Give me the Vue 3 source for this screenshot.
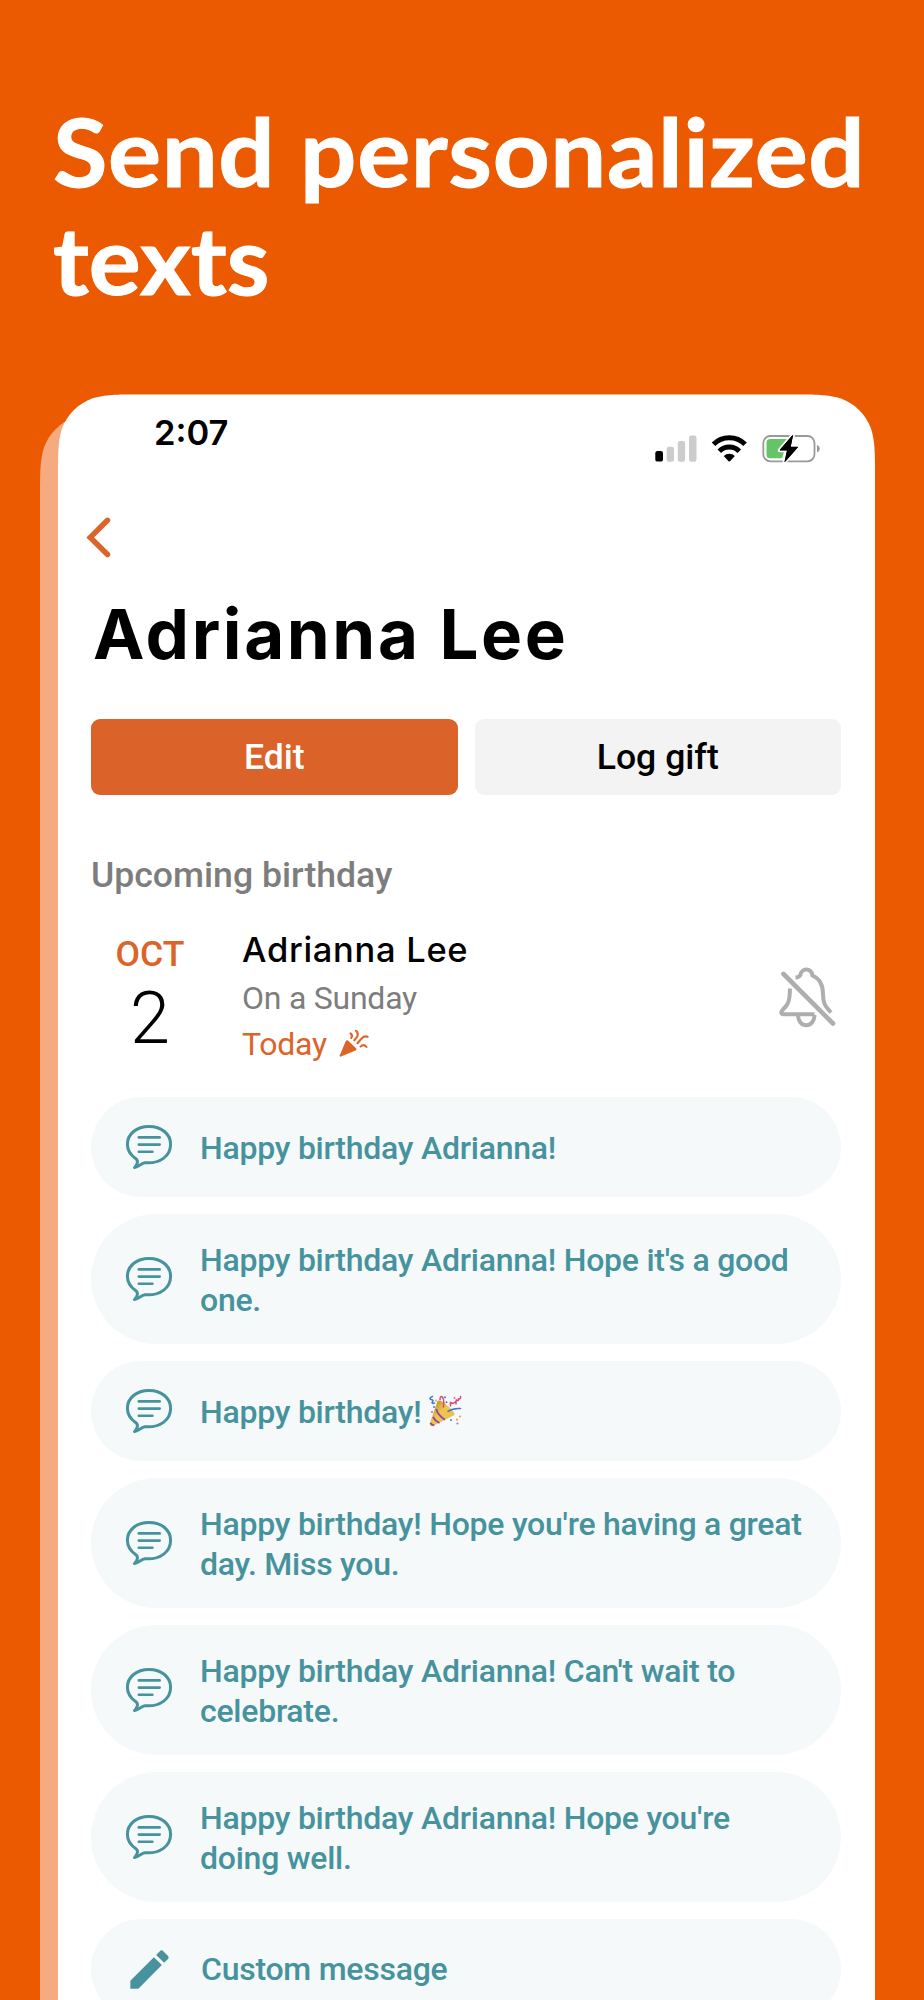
<script setup>
const messages = [
  { text: 'Happy birthday Adrianna!' },
  { text: "Happy birthday Adrianna! Hope it's a good one.", tall: true },
  { text: 'Happy birthday!', party: true },
  { text: "Happy birthday! Hope you're having a great day. Miss you.", tall: true },
  { text: "Happy birthday Adrianna! Can't wait to celebrate.", tall: true },
  { text: "Happy birthday Adrianna! Hope you're doing well.", tall: true },
]
</script>

<template>
  <div class="poster">
    <svg class="sheets" width="924" height="1620" viewBox="0 0 924 1620" aria-hidden="true">
      <path fill="#f6aa80" d="M40 1620V116C40 92.500 40 80 44 67.500C49 53.500 60 42.500 74 37.500L200 32V1620Z" />
      <path fill="#fff" d="M58 1620V97C58 73.300 58 61.400 62 48.600C67.100 34.600 78.100 23.600 92.100 18.500C104.900 14.500 116.800 14.500 140.500 14.500H792.500C816.200 14.500 828.100 14.500 840.900 18.500C854.900 23.600 865.900 34.600 871 48.600C875 61.400 875 73.300 875 97V1620Z" />
    </svg>

    <h1 class="headline"><span class="l1">Send personalized</span><br /><span class="l2">texts</span></h1>

    <main class="screen">
      <header class="status">
        <span class="time">2:07</span>
        <svg width="170" height="34" viewBox="652 432 170 34" aria-hidden="true">
          <rect x="655.300" y="451" width="7.700" height="10.600" rx="2.200" />
          <g fill="#ccc">
            <rect x="666.700" y="446.700" width="7.300" height="15" rx="2.200" />
            <rect x="677.800" y="441" width="7.300" height="20.700" rx="2.200" />
            <rect x="689" y="435.500" width="7.500" height="26.200" rx="2.200" />
          </g>
          <g fill="none" stroke="#000" stroke-width="5">
            <path d="M713.500 444.300A22.300 22.300 0 0 1 745.100 444.300" />
            <path d="M719.300 451.200A14.200 14.200 0 0 1 739.300 451.200" />
          </g>
          <path d="M723.700 456A8 8 0 0 1 734.900 456L730 461.200Q729.300 461.800 728.600 461.200Z" />
          <rect x="763.300" y="436" width="51.200" height="25.300" rx="7" fill="none" stroke="#999" stroke-width="1.800" />
          <path fill="#999" d="M817 444.700Q819.800 446 819.800 448.600Q819.800 451.300 817 452.600Z" />
          <path fill="#66c466" d="M770 439H788L782 458.300H770Q766.500 458.300 766.500 454.800V442.500Q766.500 439 770 439Z" />
          <path d="M792.900 435L779.700 450.300H787.200L784.600 462L797.900 446.900H790.500Z" fill="#000" stroke="#fff" stroke-width="4" paint-order="stroke" stroke-linejoin="round" />
          <path d="M792.600 435.500L780 450H787.500L785 461.500L797.600 447.200H790.200Z" stroke="#000" stroke-width="1" stroke-linejoin="round" />
        </svg>
      </header>

      <svg class="back" width="28" height="44" viewBox="0 0 28 44" aria-label="Back">
        <path d="M22.500 5.300L5.300 22.400L22.500 39.500" fill="none" stroke="#dc6429" stroke-width="5.500" stroke-linecap="round" />
      </svg>

      <h2 class="name">Adrianna Lee</h2>

      <div class="actions">
        <button class="btn primary">Edit</button>
        <button class="btn">Log gift</button>
      </div>

      <h3 class="section">Upcoming birthday</h3>

      <section class="event">
        <div class="date">
          <span class="month">OCT</span>
          <span class="day">2</span>
        </div>
        <div class="who">
          <span class="person">Adrianna Lee</span>
          <span class="weekday">On a Sunday</span>
          <span class="today">
            <span>Today</span>
            <svg width="30" height="30" viewBox="0 0 30 30" aria-hidden="true">
              <path fill="#dc6429" d="M6.800 12Q7.700 10.600 9 11.600L17 19.200Q18.200 20.600 16.600 21.500L2 27.600Q.3 28 .8 26.300Z" />
              <g fill="none" stroke="#dc6429" stroke-width="2.100" stroke-linecap="round">
                <path d="M11.500 4.400Q14 6.400 12.300 9" />
                <path d="M17 1.800C20.500 5 18.500 8 15.300 11.300" />
                <path d="M18.500 14.200C22 10.500 24 6 28.600 7.800" />
                <path d="M21.600 17.500Q25 14.500 27.500 18" />
              </g>
            </svg>
          </span>
        </div>
        <svg class="bell" width="60" height="64" viewBox="777 965 60 64" fill="none" stroke="#aeaeae" stroke-width="4" stroke-linecap="round" aria-label="Notifications off">
          <path d="M783.500 974L833 1023.500" stroke-width="4.600" />
          <path stroke-linecap="butt" d="M795.500 977.500Q799 977.300 800.300 975.200C801.500 967.700 811 967.700 812.500 975.500C819.500 978.500 823 985 823 994C823 1005 826 1006.500 831 1012.500" />
          <path stroke-linecap="butt" d="M790 988.500C789.500 994 790.500 1000.500 786.500 1005.500C784 1009 781.500 1010 781.300 1012.500Q781.500 1014.300 784 1014.300H814.500" />
          <path stroke-linecap="butt" d="M798 1015C798 1028.500 814.500 1028.500 814.500 1015" />
        </svg>
      </section>

      <ul class="messages">
        <li v-for="m in messages" :key="m.text" class="pill" :class="{ tall: m.tall }">
          <svg class="icon" width="48" height="46" viewBox="0 0 48 46" fill="none" stroke="#46929d" aria-hidden="true">
            <path stroke-width="3" stroke-linejoin="round" d="M24 2.400C11.600 2.400 2.400 10 2.400 20.300C2.400 26.500 5.500 31 10.600 34.600C13.800 36.800 12.600 39.800 9.500 43.600C14 42.500 16.500 39 20 38.700C35 40 45.600 32 45.600 20.300C45.600 10 36.400 2.400 24 2.400Z" />
            <path stroke-width="2.600" stroke-linecap="round" d="M13.800 13.400H34.700M13.800 20.600H34.700M13.800 27.700H27.400" />
          </svg>
          <p>{{ m.text }}
            <svg v-if="m.party" class="popper" width="33" height="33" viewBox="0 0 33 33" aria-hidden="true">
              <defs>
                <linearGradient id="cone" x1="0" y1="0" x2="1" y2="1">
                  <stop offset="0" stop-color="#a77b22" />
                  <stop offset=".45" stop-color="#f0c64a" />
                  <stop offset=".75" stop-color="#eac052" />
                  <stop offset="1" stop-color="#9b7325" />
                </linearGradient>
              </defs>
              <path fill="url(#cone)" d="M8.500 6Q11 4 17 9.500Q26 16.500 25.500 20L4 31Q.5 32 .8 28.500Z" />
              <path stroke="#8644b8" stroke-width="1.800" fill="none" d="M7.200 14Q9 20.500 16 24.700M4 22Q6 26 10.500 28M1.300 28Q2.500 30 5.300 30.300" />
              <g fill="none" stroke-linecap="round" stroke-width="1.500">
                <path stroke="#4772d6" d="M3.500 1.500Q-.5 3 2 4.500Q5.500 5 3 7.500Q4 9 5.500 8M19 16.300Q24 13 31.500 13.500" />
                <path stroke="#d64b70" d="M11 4.500C11-1 16 1 14.500 12M21.500 11V7.500L24 8.500L27 6.500V9M27 5Q30 6.500 29.500 4Q32 4.500 31.500 1.500" />
              </g>
              <g fill="#4772d6"><circle cx="16" cy="2.300" r="1" /><circle cx="17.500" cy="7.300" r="1" /><circle cx="5" cy="12" r="1" /><circle cx="22" cy="25" r="1" /></g>
              <g fill="#e06c9c"><circle cx="3" cy="17" r="1.100" /><circle cx="25.500" cy="3" r="1" /><circle cx="28.500" cy="28.500" r="1.100" /></g>
              <g fill="#e6a45a"><circle cx="28" cy="24.700" r="1.100" /><circle cx="31" cy="21.500" r="1.100" /><circle cx="7" cy="5.500" r="1" /></g>
            </svg>
          </p>
        </li>
        <li class="pill custom">
          <svg class="icon" width="51" height="51" viewBox="0 0 24 24" fill="#46929d" aria-hidden="true">
            <path d="M3 17.250V21h3.750L17.810 9.940l-3.750-3.750L3 17.250zM20.710 7.040c.39-.39.39-1.020 0-1.410l-2.340-2.340c-.39-.39-1.020-.39-1.410 0l-1.830 1.830 3.750 3.750 1.830-1.830z" />
          </svg>
          <p>Custom message</p>
        </li>
      </ul>
    </main>
  </div>
</template>

<style>
html,
body {
  margin: 0;
  background: #eb5900;
}
</style>

<style scoped>
.poster {
  position: relative;
  box-sizing: border-box;
  width: 924px;
  height: 2000px;
  padding-top: 97px;
  overflow: hidden;
  background: #eb5900;
  font-family: Roboto, "Liberation Sans", sans-serif;
}
.sheets {
  position: absolute;
  left: 0;
  top: 380px;
}
h1, h2, h3, p, ul {
  margin: 0;
  padding: 0;
}
.headline {
  height: 297px;
  padding-left: 53px;
  font: 700 93px/108px Lato, sans-serif;
  color: #fff;
  white-space: nowrap;
  -webkit-text-stroke: 1px #fff;
}
.l1,
.l2 {
  display: inline-block;
  transform-origin: left;
}
.l1 {
  letter-spacing: 0.6px;
  transform: scaleX(1.068);
}
.l2 { transform: scaleX(1.045); }
.screen {
  position: relative;
  box-sizing: border-box;
  width: 817px;
  margin-left: 58px;
  padding: 18px 34px 0 33px;
}
.status {
  display: flex;
  justify-content: space-between;
  height: 102px;
  padding: 0 19px 0 63px;
}
.status svg { margin-top: 20px; }
.time {
  padding-top: 1px;
  font: 600 34.5px/40px Inter, sans-serif;
}
.back {
  display: block;
  margin-left: -6px;
  margin-top: 1px;
}
.name {
  height: 127px;
  margin-top: 33px;
  padding-left: 2px;
  font: 700 69px/84px Inter, sans-serif;
  letter-spacing: 2.6px;
  white-space: nowrap;
}
.actions {
  display: grid;
  grid-template-columns: 1fr 1fr;
  gap: 17px;
}
.btn {
  height: 76px;
  padding: 0;
  border: 0;
  border-radius: 9px;
  background: #f3f3f3;
  color: #000;
  font: 500 35.6px/76px Roboto, sans-serif;
}
.btn.primary {
  background: #db6229;
  color: #fff;
}
.section {
  margin-top: 60px;
  font-size: 35.6px;
  font-weight: 500;
  line-height: 40px;
  color: #7d7d7d;
}
.event {
  display: flex;
  height: 182px;
  margin-top: 20px;
}
.date {
  display: flex;
  flex-direction: column;
  align-items: center;
  width: 118px;
  padding-top: 19px;
}
.month {
  font-size: 35.6px;
  font-weight: 500;
  line-height: 40px;
  color: #dc6429;
}
.day {
  margin-top: 9px;
  font-size: 72px;
  font-weight: 300;
  line-height: 72px;
}
.who {
  display: flex;
  flex-direction: column;
  width: 400px;
  margin-left: 33px;
  padding-top: 15px;
  white-space: nowrap;
}
.person {
  font: 550 34.5px/40px Inter, sans-serif;
  letter-spacing: 0.7px;
}
.weekday {
  margin-top: 8px;
  font-size: 32px;
  line-height: 40px;
  letter-spacing: -0.24px;
  color: #7d7d7d;
}
.today {
  display: flex;
  gap: 12px;
  margin-top: 6px;
  font-size: 32px;
  line-height: 40px;
  letter-spacing: -0.24px;
  color: #dc6429;
}
.today svg { margin-top: 5px; }
.bell {
  margin: 50px 4px 0 auto;
}
.messages {
  display: flex;
  flex-direction: column;
  gap: 17.1px;
  list-style: none;
}
.pill {
  display: flex;
  flex-shrink: 0;
  align-items: center;
  box-sizing: border-box;
  height: 100.2px;
  padding: 0 32px 0 34px;
  border-radius: 66px;
  background: #f5f9fa;
  color: #46929d;
  font-size: 32px;
  font-weight: 500;
  line-height: 40px;
  letter-spacing: -0.25px;
}
.tall { height: 129.8px; }
.icon { flex-shrink: 0; }
.pill p {
  height: 40px;
  margin-left: 27px;
  padding-top: 1px;
}
.pill.tall p { height: 80px; }
.popper {
  display: inline-block;
  vertical-align: -5px;
}
.custom { padding-left: 33px; }
.custom p { margin-left: 26px; }
.pill.custom p { padding-top: 0; }
</style>
